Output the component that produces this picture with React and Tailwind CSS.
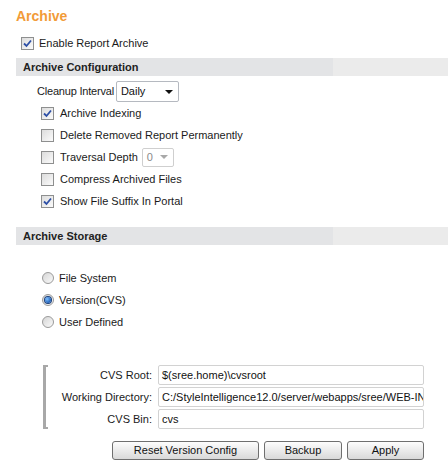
function Check({ checked }) {
  return (
    <span className="flex h-[13px] w-[13px] shrink-0 items-center justify-center border border-[#8e8f8f] bg-gradient-to-br from-[#dcdcdc] to-[#fbfbfb]">
      {checked && (
        <svg width="9" height="9" viewBox="0 0 9 9">
          <path d="M1 4.5 L3.5 7 L8 1.5" fill="none" stroke="#2d4fa6" strokeWidth="1.8" />
        </svg>
      )}
    </span>
  );
}

function Radio({ checked }) {
  return (
    <span className="flex h-[12px] w-[12px] shrink-0 items-center justify-center rounded-full border border-[#9a9a9a] bg-gradient-to-br from-[#d6d6d6] to-[#fafafa]">
      {checked && (
        <span className="h-[6px] w-[6px] rounded-full bg-[radial-gradient(circle_at_35%_35%,#7fc0ff,#1e5fb8_70%)] ring-1 ring-[#1a3f7a]" />
      )}
    </span>
  );
}

function Select({ value, disabled, className }) {
  return (
    <span
      className={
        "flex items-center justify-between rounded-[2px] border bg-white pl-[4px] pr-[5px] " +
        (disabled ? "border-[#cfcfcf] text-[#8a8a8a] " : "border-[#b5b9c0] text-[#111] ") +
        className
      }
    >
      <span>{value}</span>
      <svg width="8" height="4" viewBox="0 0 8 4">
        <path d="M0 0 L8 0 L4 4 Z" fill={disabled ? "#a8a8a8" : "#111"} />
      </svg>
    </span>
  );
}

function CheckRow({ checked, label, children }) {
  return (
    <div className="flex h-[22px] items-center pl-[25px]">
      <Check checked={checked} />
      <span className="ml-[6px]">{label}</span>
      {children}
    </div>
  );
}

function Header({ title }) {
  return (
    <div className="flex h-[18px] font-bold text-[#222]">
      <div className="flex w-[317px] items-center bg-[#e3e4e6] pl-[7px]">{title}</div>
      <div className="flex-1 bg-[#ebebeb]" />
    </div>
  );
}

function RadioRow({ checked, label }) {
  return (
    <div className="flex h-[22px] items-center pl-[26px]">
      <Radio checked={checked} />
      <span className="ml-[5px]">{label}</span>
    </div>
  );
}

function Field({ label, value }) {
  return (
    <div className="flex h-[22px] items-center">
      <span className="w-[104px] text-right">{label}</span>
      <span className="ml-[6px] flex h-[20px] w-[266px] items-center overflow-hidden whitespace-nowrap rounded-[2px] border border-[#d2d2d2] bg-white px-[3px] text-[#111]">
        {value}
      </span>
    </div>
  );
}

function Button({ label, className }) {
  return (
    <button className={"h-[19px] rounded-[3px] border border-[#6f6f6f] bg-gradient-to-b from-[#fdfdfd] to-[#d9d9d9] text-[11px] text-[#111] " + className}>
      {label}
    </button>
  );
}

export default function App() {
  return (
    <div className="h-[473px] w-[448px] bg-white pl-4 pt-[7px] font-['Liberation_Sans',Arial,sans-serif] text-[11px] text-[#1a1a1a]">
      <h1 className="text-[14px] font-bold leading-[18px] text-[#f29b38]">Archive</h1>

      <div className="mt-[9px] flex h-[18px] items-center pl-[5px]">
        <Check checked />
        <span className="ml-[5px]">Enable Report Archive</span>
      </div>

      <div className="mt-[6px]">
        <Header title="Archive Configuration" />
      </div>

      <div className="mt-[5px] flex h-[21px] items-center pl-[21px]">
        <span className="tracking-[-0.2px]">Cleanup Interval</span>
        <Select value="Daily" className="ml-[2px] h-[21px] w-[63px]" />
      </div>

      <CheckRow checked label="Archive Indexing" />
      <CheckRow label="Delete Removed Report Permanently" />
      <CheckRow label="Traversal Depth">
        <Select value="0" disabled className="ml-[4px] h-[19px] w-[32px]" />
      </CheckRow>
      <CheckRow label="Compress Archived Files" />
      <CheckRow checked label="Show File Suffix In Portal" />

      <div className="mt-[15px]">
        <Header title="Archive Storage" />
      </div>

      <div className="mt-[22px]">
        <RadioRow label="File System" />
        <RadioRow checked label="Version(CVS)" />
        <RadioRow label="User Defined" />
      </div>

      <div className="mt-[32px] flex pl-[27px]">
        <div className="w-[5px] border-y-2 border-l-[3px] border-[#a8a8a8]" />
        <div className="-my-[1px]">
          <Field label="CVS Root:" value="$(sree.home)\cvsroot" />
          <Field label="Working Directory:" value="C:/StyleIntelligence12.0/server/webapps/sree/WEB-INF" />
          <Field label="CVS Bin:" value="cvs" />
        </div>
      </div>

      <div className="mt-[12px] flex justify-end gap-[5px] pr-[24px]">
        <Button label="Reset Version Config" className="w-[147px]" />
        <Button label="Backup" className="w-[78px]" />
        <Button label="Apply" className="w-[77px]" />
      </div>
    </div>
  );
}
